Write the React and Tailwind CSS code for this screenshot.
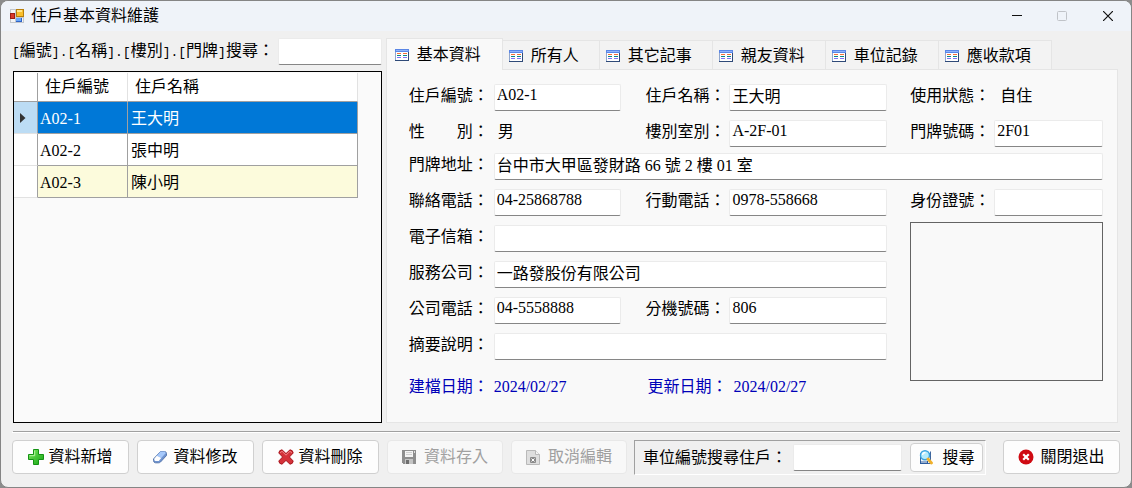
import { useState } from 'react'

const residents = [
  { id: 'A02-1', name: '王大明' },
  { id: 'A02-2', name: '張中明' },
  { id: 'A02-3', name: '陳小明' },
]

const tabs = ['基本資料', '所有人', '其它記事', '親友資料', '車位記錄', '應收款項']

function AppIcon() {
  return (
    <svg width="14" height="14" viewBox="0 0 14 14" shapeRendering="crispEdges">
      <path d="M0 0h14v14H0z" fill="#c3c7cc" />
      <path d="M1 1h4v3H1zM1 10h4v3H1zM12 9h1v4h-1z" fill="#f3f4f6" />
      <path d="M6 0h8v8H6z" fill="#b87f0c" />
      <path d="M7 1h6v6H7z" fill="#f9bf2c" />
      <path d="M7 1h5v2H7z" fill="#ffe48a" />
      <path d="M0 4h5v6H0z" fill="#9c1d12" />
      <path d="M1 5h3v4H1z" fill="#d9382a" />
      <path d="M6 9h6v4H6z" fill="#2f63c6" />
      <path d="M6 9h5v3H6z" fill="#6aa8fa" />
    </svg>
  )
}

function TableIcon() {
  return (
    <svg width="14" height="12" viewBox="0 0 14 12" shapeRendering="crispEdges" className="shrink-0">
      <path d="M0 0h14v12H0z" fill="#2f4a78" />
      <path d="M0 0h13v11H0z" fill="#8fa6cf" />
      <path d="M1 3h12v8H1z" fill="#fff" />
      <path d="M0 0h14v3H0z" fill="#5b86e5" />
      <path d="M1 1h12v1H1z" fill="#8fb4fb" />
      <path d="M2 4h4v1H2zM8 4h4v1H8z" fill="#f4703a" />
      <path d="M2 6h4v1H2zM8 6h4v1H8z" fill="#0c8585" />
      <path d="M2 8h4v1H2zM8 8h4v1H8z" fill="#7f72f5" />
    </svg>
  )
}

function PlusIcon() {
  return (
    <svg width="16" height="16" viewBox="0 0 16 16">
      <defs>
        <linearGradient id="plus" x1="0" y1="0" x2="1" y2="1">
          <stop offset="0" stopColor="#7fe860" />
          <stop offset="1" stopColor="#12a512" />
        </linearGradient>
      </defs>
      <path d="M5.5.5h5v5h5v5h-5v5h-5v-5h-5v-5h5z" fill="url(#plus)" stroke="#149214" strokeLinejoin="round" />
      <path d="M6.7 1.6v5.1H1.6" fill="none" stroke="#b6f7a0" />
    </svg>
  )
}

function EraserIcon() {
  return (
    <svg width="14" height="14" viewBox="0 0 14 14">
      <path d="M7.5 1.5h4q2 .3 2 2v2l-6 6.500q-.8.800-2 .8h-3Q.5 12.500.5 10.500V9z" fill="#6f93cf" stroke="#5878ae" />
      <path d="M7.500 1.600h4q1.600.4.900 1.800L8.300 8 3.800 5.700z" fill="#a5c8fb" />
      <path d="M3.800 5.700 8.300 8l-2.500 3H2.400Q.8 10.500 1.300 8.700z" fill="#fff" />
    </svg>
  )
}

function DeleteIcon() {
  return (
    <svg width="16" height="16" viewBox="0 0 16 16">
      <path
        d="M4 .8 8 4.600 12 .8q3 .3 3.200 3.200L11.400 8l3.800 4q-.2 2.900-3.200 3.200L8 11.400l-4 3.800Q1 14.900.8 12l3.800-4L.8 4Q1 1.100 4 .8z"
        fill="#d4323a"
        stroke="#a8161f"
      />
      <path d="M2.200 4 4 2.200l4 4 4-4L13.800 4" fill="none" stroke="#ee8a8a" />
    </svg>
  )
}

function SaveIcon() {
  return (
    <svg width="14" height="14" viewBox="0 0 14 14" shapeRendering="crispEdges">
      <path d="M0 0h14v14H1l-1-1z" fill="#8e8e8e" />
      <path d="M3 1h8v6H3z" fill="#f4f4f4" />
      <path d="M4 2h6v1H4zM4 4h6v1H4z" fill="#d0d0d0" />
      <path d="M3 9h8v5H3z" fill="#c4c4c4" />
      <path d="M4 10h3v4H4z" fill="#6e6e6e" />
      <path d="M12 1h1v2h-1z" fill="#e0e0e0" />
    </svg>
  )
}

function CancelIcon() {
  return (
    <svg width="14" height="15" viewBox="0 0 14 15">
      <path d="M.5.500h9l4 4v10H.500z" fill="#dedede" stroke="#b9b9b9" />
      <path d="M9.500.500v4h4" fill="#f5f5f5" stroke="#b9b9b9" />
      <rect x="4" y="7" width="6" height="6" rx="1" fill="#8a8a8a" />
      <path d="m5.500 8.500 3 3m0-3-3 3" stroke="#fff" />
    </svg>
  )
}

function SearchIcon() {
  return (
    <svg width="14" height="15" viewBox="0 0 14 15">
      <path d="M1.500 3.500h10v10h-10z" fill="#f2f5fa" stroke="#3d649c" />
      <path d="M1 11h8v3H1z" fill="#2d5c9e" />
      <path d="M2 12h6" stroke="#fff" />
      <path d="M11.500 1.500v10" stroke="#3d649c" />
      <circle cx="6" cy="5.200" r="4.500" fill="#b5ecfd" stroke="#3ba3e0" strokeWidth="1.400" />
      <path d="M3.500 5q.3-2.500 3-2.500" fill="none" stroke="#fff" strokeWidth="1.300" />
      <path d="m9 9 3.500 4" stroke="#f0b02a" strokeWidth="2.800" strokeLinecap="round" />
    </svg>
  )
}

function CloseIcon() {
  return (
    <svg width="16" height="16" viewBox="0 0 16 16">
      <circle cx="8" cy="8" r="7.500" fill="#cf0a12" />
      <path d="m5.200 5.200 5.600 5.600m0-5.600-5.600 5.600" stroke="#fff" strokeWidth="2.200" />
    </svg>
  )
}

function TextBox({ className = '', ...props }) {
  return (
    <input
      type="text"
      className={`h-[27px] min-w-0 rounded-[2px] border border-[#ebebeb] border-b-[#868686] bg-white pb-1.5 pl-0.5 leading-5 outline-none ${className}`}
      {...props}
    />
  )
}

function Field({ id, label, value = '', className = '' }) {
  return (
    <>
      <label htmlFor={id} className="leading-6 whitespace-nowrap">{label}：</label>
      <TextBox id={id} defaultValue={value} className={className} />
    </>
  )
}

function ToolButton({ icon, children, className = '', ...props }) {
  return (
    <button
      type="button"
      className={`flex h-[34px] items-center justify-center rounded-[4px] border border-[#d0d0d0] bg-[#fdfdfd] leading-6 whitespace-nowrap disabled:border-[#e8e8e8] disabled:bg-[#f8f8f8] disabled:text-[#a0a0a0] ${className}`}
      {...props}
    >
      {icon}
      {children}
    </button>
  )
}

function ResidentTable({ selected, onSelect }) {
  return (
    <table className="mt-px w-[344px] max-w-full table-fixed border-separate border-spacing-0 text-left">
      <colgroup>
        <col className="w-6" />
        <col className="w-[90px]" />
        <col />
      </colgroup>
      <thead>
        <tr className="h-[29px] bg-white">
          <th className="border-r border-b border-[#a0a0a0]" aria-label="選取" />
          <th className="border-r border-b border-r-[#e2e2e2] border-b-[#a0a0a0] pl-[7px] leading-6 font-normal">住戶編號</th>
          <th className="border-r border-b border-r-[#e2e2e2] border-b-[#a0a0a0] pl-[7px] leading-6 font-normal">住戶名稱</th>
        </tr>
      </thead>
      <tbody>
        {residents.map((r, i) => {
          const active = r.id === selected
          const row = active ? 'bg-[#0078d7] text-white' : i % 2 ? 'bg-white' : 'bg-[#fcfbdc]'
          return (
            <tr key={r.id} className="h-8" onClick={() => onSelect(r.id)}>
              <td className={`border-r border-b border-r-[#a0a0a0] border-b-[#e2e2e2] ${active ? 'bg-[#bcdcf4]' : 'bg-white'}`}>
                {active && (
                  <svg width="6" height="10" viewBox="0 0 6 10" className="ml-1.5">
                    <path d="M0 0l5.500 5L0 10z" fill="#333" />
                  </svg>
                )}
              </td>
              <td className={`border-r border-b border-[#a0a0a0] pt-0.5 pl-0.5 leading-6 ${row}`}>{r.id}</td>
              <td className={`border-r border-b border-[#a0a0a0] pt-0.5 pl-[3px] leading-6 ${row}`}>{r.name}</td>
            </tr>
          )
        })}
      </tbody>
    </table>
  )
}

function BasicForm() {
  return (
    <div className="grid grid-cols-[85px_128fr_24px_84px_158fr_23px_84px_109fr] grid-rows-[36px_33px_36px_33px_auto] items-start pt-[14px] pr-[14px] pl-[22px]">
      <Field id="no" label="住戶編號" value="A02-1" />
      <span />
      <Field id="name" label="住戶名稱" value="王大明" />
      <span />
      <span className="leading-6 whitespace-nowrap">使用狀態：</span>
      <span className="pl-1.5 leading-6">自住</span>

      <span className="leading-6 whitespace-nowrap">性　　別：</span>
      <span className="pl-1 leading-6">男</span>
      <span />
      <Field id="unit" label="樓別室別" value="A-2F-01" />
      <span />
      <Field id="door" label="門牌號碼" value="2F01" />

      <Field id="address" label="門牌地址" value="台中市大甲區發財路 66 號 2 樓 01 室" className="col-span-7" />

      <Field id="phone" label="聯絡電話" value="04-25868788" />
      <span />
      <Field id="mobile" label="行動電話" value="0978-558668" />
      <span />
      <Field id="idno" label="身份證號" />

      <div className="col-span-5 grid grid-cols-subgrid grid-rows-[36px_36px_36px_36px_auto] items-start pt-[3px]">
        <Field id="email" label="電子信箱" className="col-span-4" />
        <Field id="company" label="服務公司" value="一路發股份有限公司" className="col-span-4" />
        <Field id="officePhone" label="公司電話" value="04-5558888" />
        <span />
        <Field id="ext" label="分機號碼" value="806" />
        <Field id="note" label="摘要說明" className="col-span-4" />
        <span className="pt-1.5 leading-6 whitespace-nowrap text-[#0000b8]">建檔日期：</span>
        <span className="pt-1.5 leading-6 text-[#0000b8]">2024/02/27</span>
        <span />
        <span className="pt-1.5 pl-0.5 leading-6 whitespace-nowrap text-[#0000b8]">更新日期：</span>
        <span className="pt-1.5 pl-1 leading-6 text-[#0000b8]">2024/02/27</span>
      </div>
      <div className="col-span-2 col-start-7 h-[159px] border border-[#646464]" />
    </div>
  )
}

export default function App() {
  const [tab, setTab] = useState(0)
  const [selected, setSelected] = useState('A02-1')

  return (
    <div className="min-h-screen bg-[#8c8c8c] font-['Liberation_Serif','Noto_Sans_CJK_TC',serif] text-base font-normal text-black">
      <div className="flex min-h-screen flex-col overflow-hidden rounded-lg border border-[#858585] bg-[#f0f0f0]">
        {/* Title bar */}
        <header className="flex h-[30px] items-center bg-[#eff3f9] pl-[9px]">
          <AppIcon />
          <h1 className="ml-[7px] leading-6">住戶基本資料維護</h1>
          <div className="ml-auto flex h-full">
            <button type="button" aria-label="最小化" className="flex w-[45px] items-center justify-center">
              <svg width="10" height="10" viewBox="0 0 10 10"><path d="M0 4.500h10" stroke="#111" /></svg>
            </button>
            <button type="button" aria-label="最大化" disabled className="flex w-[45px] items-center justify-center">
              <svg width="10" height="10" viewBox="0 0 10 10"><rect x=".5" y=".5" width="9" height="9" rx="1" fill="none" stroke="#c0c3c8" /></svg>
            </button>
            <button type="button" aria-label="關閉" className="flex w-[47px] items-center justify-center">
              <svg width="10" height="10" viewBox="0 0 10 10"><path d="M0 0l10 10m0-10l-10 10" stroke="#111" strokeWidth="1.200" /></svg>
            </button>
          </div>
        </header>

        <main className="grid flex-1 grid-cols-[370fr_733fr] gap-x-1 pt-[7px] pr-[13px] pl-[11px]">
          {/* Resident list */}
          <section className="flex flex-col">
            <div className="flex items-start">
              <label htmlFor="search" className="flex pt-0.5 leading-6 whitespace-nowrap">
                <span className="font-['Liberation_Mono','Noto_Sans_CJK_TC',monospace]">
                  <span className="text-[13px]">[</span>編號<span className="text-[13px]">].[</span>名稱
                  <span className="text-[13px]">].[</span>樓別<span className="text-[13px]">].[</span>門牌
                  <span className="text-[13px]">]</span>搜尋：
                </span>
              </label>
              <TextBox id="search" className="ml-auto w-[104px]" />
            </div>
            <div className="mt-[6px] ml-px flex-1 border border-black bg-[#fafafa]">
              <ResidentTable selected={selected} onSelect={setSelected} />
            </div>
          </section>

          {/* Detail tabs */}
          <section className="flex flex-col">
            <div role="tablist" className="flex h-[31px] items-end">
              {tabs.map((t, i) => (
                <button
                  key={t}
                  type="button"
                  role="tab"
                  aria-selected={tab === i}
                  onClick={() => setTab(i)}
                  className={`flex items-center gap-2 border-t border-r border-[#e5e5e5] leading-6 whitespace-nowrap ${
                    tab === i ? 'relative -mb-px h-[32px] border-l bg-[#f9f9f9] pr-[21px] pl-2' : 'h-[29px] bg-[#f3f3f3] pt-0.5 pr-5 pl-1.5'
                  }`}
                >
                  <TableIcon />
                  {t}
                </button>
              ))}
            </div>
            <div role="tabpanel" className="flex-1 border border-[#e5e5e5] bg-[#f9f9f9]">
              <BasicForm />
            </div>
          </section>
        </main>

        {/* Toolbar */}
        <footer className="mt-2 mr-[11px] ml-3 border-t border-[#a0a0a0]">
          <div className="-ml-px flex border-t border-white pt-[7px] pb-3">
            <ToolButton icon={<PlusIcon />} className="w-[117px] gap-1">資料新增</ToolButton>
            <ToolButton icon={<EraserIcon />} className="ml-2 w-[117px] gap-1.5">資料修改</ToolButton>
            <ToolButton icon={<DeleteIcon />} className="ml-2 w-[117px] gap-1">資料刪除</ToolButton>
            <ToolButton icon={<SaveIcon />} disabled className="ml-2 w-[116px] gap-2">資料存入</ToolButton>
            <ToolButton icon={<CancelIcon />} disabled className="ml-2 w-[116px] gap-2">取消編輯</ToolButton>
            <div className="ml-[7px] flex h-[35px] items-center border border-t-[#a0a0a0] border-r-white border-b-white border-l-[#a0a0a0] pr-0.5 pl-2">
              <label htmlFor="parking" className="leading-6 whitespace-nowrap">車位編號搜尋住戶：</label>
              <TextBox id="parking" className="ml-1.5 w-[109px]" />
              <ToolButton icon={<SearchIcon />} className="ml-2 h-[29px]! w-[73px] gap-2.5">搜尋</ToolButton>
            </div>
            <ToolButton icon={<CloseIcon />} className="ml-auto w-[117px] gap-1.5">關閉退出</ToolButton>
          </div>
        </footer>
      </div>
    </div>
  )
}
